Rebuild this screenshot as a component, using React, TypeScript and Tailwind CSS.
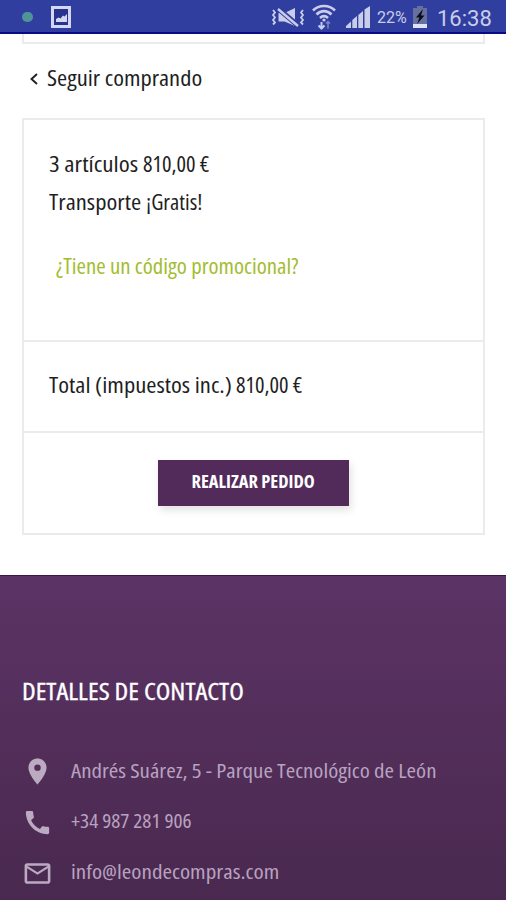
import type { ReactNode } from 'react';
import { MdCall, MdLocationOn, MdMailOutline } from 'react-icons/md';

interface ContactRowProps {
  icon: ReactNode;
  children: ReactNode;
}

const StatusBar = () => {
  return (
    <header className="flex h-[34px] shrink-0 items-center border-b-2 border-[#0a0a86] bg-[#303f9f] pr-[15px] pl-[22px] font-[Roboto,sans-serif] font-stretch-normal text-[#c9cdea]">
      <span className="mt-[2px] h-[10px] w-[11px] rounded-full bg-[#4f9597]" />
      <svg className="mt-[2px] ml-[18px] h-[22px] w-[20px]" viewBox="0 0 20 22">
        <rect x="1.500" y="1.500" width="17" height="19" fill="#27338f" stroke="#d3d7f2" strokeWidth="3" />
        <path d="M5 16v-3l2.500-1.500 2 1 2.500-3 1.500 1L16 8v8z" fill="#d3d7f2" />
      </svg>
      <div className="ml-auto flex items-center">
        <svg className="mt-[2px] h-[22px] w-[34px]" viewBox="0 0 34 22" fill="none" stroke="currentColor">
          <path d="M2 4l2 2.500-2 2.500 2 2.500-2 2.500 2 2.500-2 2M32 4l-2 2.500 2 2.500-2 2.500 2 2.500-2 2.500 2 2" strokeWidth="1.800" />
          <path d="M7.500 7h6L24 2v18l-10.500-4.500h-6z" fill="currentColor" stroke="none" />
          <path d="M7 2.500l20 17" stroke="#303f9f" strokeWidth="5" />
          <path d="M7 3l20 17" strokeWidth="2.400" />
        </svg>
        <svg className="mt-[1px] ml-[7px] h-[26px] w-[24px]" viewBox="0 0 24 26" fill="none" stroke="currentColor">
          <path d="M1 6.500c6-6 16-6 22 0M4.500 10.500c4.500-4.500 10.500-4.500 15 0M8 14c2.500-2.300 5.500-2.300 8 0" strokeWidth="2.600" />
          <circle cx="12" cy="16" r="1.600" fill="currentColor" stroke="none" />
          <path d="M9.500 18v6M6.500 21.500l3 3 3-3" strokeWidth="2" />
          <path d="M16 24.500v-7M14 19.500l2-2 2 2" strokeWidth="1.500" opacity=".5" />
        </svg>
        <svg className="mt-[2px] ml-[10px] h-[22px] w-[24px]" viewBox="0 0 24 22" fill="currentColor">
          <path d="M0 22v-2l5-4.500V22zM6.300 22v-8L11 10v12zM12.300 22V9L17 5v17zM18.500 22V3.500L24 0v22z" />
        </svg>
        <span className="mt-[4px] ml-[7px] w-[32px] text-[16px] leading-5 whitespace-nowrap">22%</span>
        <svg className="mt-[2px] ml-[3px] h-[22px] w-[16px]" viewBox="0 0 16 22">
          <path d="M5 0h6v2h4v20H1V2h4z" fill="#66709f" />
          <path d="M1 18h14v4H1z" fill="#dfe2f6" />
          <path d="M11 3L4 11.500h3.500L5 18l7.500-8.500H9z" fill="#0b0b14" />
        </svg>
        <span className="mt-[5px] ml-[9px] w-[54px] text-[22px] leading-7 whitespace-nowrap">16:38</span>
      </div>
    </header>
  );
};

const ContactRow = ({ icon, children }: ContactRowProps) => {
  return (
    <li className="flex h-[51px] items-center gap-[18px] whitespace-nowrap">
      <span className="flex w-[31px] justify-center text-[31px] text-[#bca9c2]">{icon}</span>
      {children}
    </li>
  );
};

const App = () => {
  return (
    <div className="flex h-[900px] w-full flex-col overflow-hidden bg-white font-['Open_Sans','Noto_Sans',sans-serif] font-stretch-condensed text-[#1f1f1f]">
      <StatusBar />

      <main className="pr-[21px] pl-[22px]">
        <div className="h-[10px] border-x-2 border-b-2 border-[#ebebeb]" />

        <a className="mt-[18px] flex h-[30px] items-center pl-[7px] text-[22px] leading-[30px] whitespace-nowrap">
          <svg className="mt-[4px] mr-[8px] h-[12px] w-[10px]" viewBox="0 0 10 12" fill="none" stroke="currentColor" strokeWidth="1.900">
            <path d="M8 1L2.500 6 8 11" />
          </svg>
          <span className="origin-left scale-x-[1.115]">Seguir comprando</span>
        </a>

        <section className="mt-[26px] border-2 border-[#ebebeb]">
          <div className="h-[220px] px-[25px] pt-[24px] text-[22px] leading-[38px] whitespace-nowrap">
            <p className="flex h-[38px] items-baseline">
              <span className="w-[94px]">
                <span className="inline-block origin-left scale-x-[1.14]">3 artículos</span>
              </span>
              <span className="origin-left scale-x-[1.065] text-[21px]">810,00 €</span>
            </p>
            <p className="flex h-[38px] items-baseline">
              <span className="w-[97px]">
                <span className="inline-block origin-left scale-x-[1.12]">Transporte</span>
              </span>
              <span className="origin-left scale-x-[1.07] text-[21px]">¡Gratis!</span>
            </p>
            <a className="mt-[27px] ml-[7px] block w-fit origin-left scale-x-[1.09] text-[21px] text-[#a2bd30]">
              ¿Tiene un código promocional?
            </a>
          </div>

          <div className="flex h-[91px] items-baseline border-t-2 border-[#ebebeb] px-[25px] pt-[23px] text-[22px] leading-[38px] whitespace-nowrap">
            <span className="w-[187px]">
              <span className="inline-block origin-left scale-x-[1.12]">Total (impuestos inc.)</span>
            </span>
            <span className="origin-left scale-x-[1.065] text-[21px]">810,00 €</span>
          </div>

          <div className="flex h-[102px] justify-center border-t-2 border-[#ebebeb] pt-[27px]">
            <button className="h-[46px] w-[191px] bg-[#522b5b] pb-[3px] text-[18px] font-bold whitespace-nowrap text-white shadow-[2px_4px_8px_rgba(0,0,0,0.12)]">
              <span className="inline-block scale-x-[1.025]">REALIZAR PEDIDO</span>
            </button>
          </div>
        </section>
      </main>

      <footer className="mt-[40px] flex-1 border-t border-[#3b1548] bg-linear-to-b from-[#5c3365] to-[#49294f] px-[22px] pt-[99px]">
        <h2 className="w-fit origin-left scale-x-[1.115] text-[24px] leading-[32px] whitespace-nowrap text-white [-webkit-text-stroke:0.3px_white]">
          DETALLES DE CONTACTO
        </h2>
        <ul className="mt-[39px] text-[20px] text-[#b9a2c0]">
          <ContactRow icon={<MdLocationOn />}>
            <span className="origin-left scale-x-[1.145] pb-[2px]">Andrés Suárez, 5 - Parque Tecnológico de León</span>
          </ContactRow>
          <ContactRow icon={<MdCall />}>
            <span className="origin-left scale-x-[1.065] pb-[4px]">+34 987 281 906</span>
          </ContactRow>
          <ContactRow icon={<MdMailOutline />}>
            <span className="origin-left scale-x-[1.155] pb-[4px]">info@leondecompras.com</span>
          </ContactRow>
        </ul>
      </footer>
    </div>
  );
};

export default App;
